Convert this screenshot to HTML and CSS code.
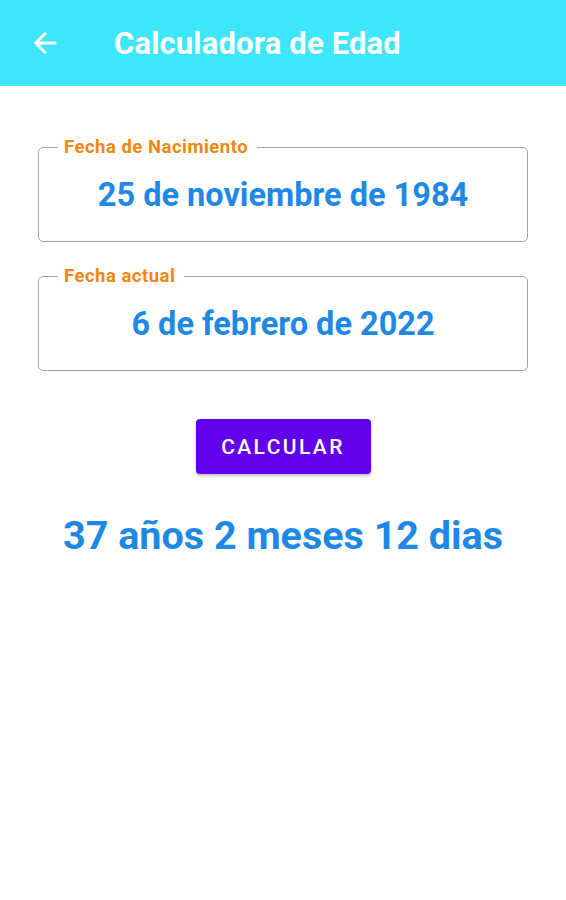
FILE: index.html
```html
<!DOCTYPE html>
<html lang="es">
<head>
<meta charset="utf-8">
<title>Calculadora de Edad</title>
<link rel="stylesheet" href="styles.css">
</head>
<body>
<header class="appbar">
  <svg class="back" width="34" height="34" viewBox="0 0 24 24" aria-hidden="true">
    <path d="M20 11H7.83l5.59-5.59L12 4l-8 8 8 8 1.41-1.41L7.83 13H20v-2z" fill="#ffffff"/>
  </svg>
  <h1 class="title">Calculadora de Edad</h1>
</header>
<main class="content">
  <fieldset class="field">
    <legend class="label">Fecha de Nacimiento</legend>
    <div class="value">25 de noviembre de 1984</div>
  </fieldset>
  <fieldset class="field">
    <legend class="label">Fecha actual</legend>
    <div class="value">6 de febrero de 2022</div>
  </fieldset>
  <button class="btn" type="button">CALCULAR</button>
  <p class="result">37 años 2 meses 12 dias</p>
</main>
</body>
</html>
```

FILE: styles.css
```css
html, body {
  margin: 0;
  padding: 0;
  background: #ffffff;
  font-family: Roboto, "Liberation Sans", sans-serif;
}

.appbar {
  height: 86px;
  background: #3de6fa;
  display: flex;
  align-items: center;
  padding-left: 28px;
  box-sizing: border-box;
}

.back {
  display: block;
  width: 34px;
  height: 34px;
  flex: none;
}

.title {
  margin: 0 0 0 52px;
  color: #ffffff;
  font-size: 31px;
  font-weight: 700;
  letter-spacing: 0.15px;
}

.content {
  padding: 51px 38px 0;
  display: flex;
  flex-direction: column;
  align-items: stretch;
}

.field {
  margin: 0 0 24px;
  padding: 0;
  border: 1.5px solid #a3a3a3;
  border-radius: 5px;
  min-width: 0;
}

.label {
  margin-left: 19px;
  padding: 0 9px 0 6px;
  color: #f0870f;
  font-size: 18.5px;
  font-weight: 700;
  letter-spacing: 0.5px;
  line-height: 21px;
}

.value {
  text-align: center;
  color: #1e88e5;
  font-size: 32.5px;
  font-weight: 700;
  line-height: 38px;
  padding: 18px 0 27px;
}

.btn {
  align-self: center;
  margin-top: 24px;
  width: 175px;
  height: 55px;
  border: none;
  border-radius: 4px;
  background: #6200ee;
  color: #ffffff;
  font-family: Roboto, "Liberation Sans", sans-serif;
  font-size: 21px;
  font-weight: 500;
  letter-spacing: 2.4px;
  box-shadow: 0 2px 3px rgba(0,0,0,0.25);
}

.result {
  margin: 40px 0 0;
  text-align: center;
  color: #1e88e5;
  font-size: 39.5px;
  font-weight: 700;
  line-height: 44px;
}
```
